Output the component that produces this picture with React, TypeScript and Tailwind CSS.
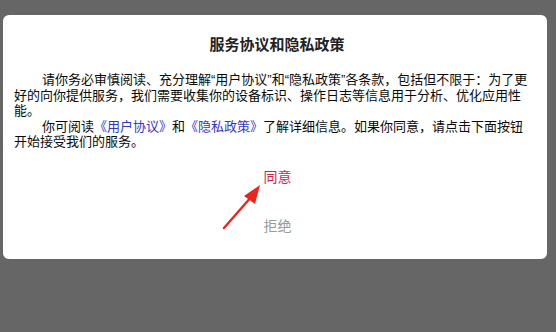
export default function App() {
  return (
    <div className="relative h-[332px] w-[556px] bg-[#666666] px-[3px] pt-[15px] font-['Liberation_Sans','Noto_Sans_CJK_SC',sans-serif]">
      <div className="flex h-[244px] w-[544px] flex-col rounded-[6px] bg-white pl-[11px] pr-[17px]">
        {/* Title */}
        <h2 className="pt-[20px] pl-[10px] text-center text-[15px] leading-[20px] font-bold text-[#222222]">
          服务协议和隐私政策
        </h2>

        {/* Body */}
        <div className="mt-[17px] text-[13px] leading-[15.5px] text-[#0a0a0a]">
          <p className="indent-[28px]">
            请你务必审慎阅读、充分理解“用户协议”和“隐私政策”各条款，包括但不限于：为了更好的向你提供服务，我们需要收集你的设备标识、操作日志等信息用于分析、优化应用性能。
          </p>
          <p className="indent-[28px]">
            <span className="whitespace-nowrap">
              你可阅读<span className="text-[#3535c8]">《用户协议》</span>和<span className="text-[#3535c8]">《隐私政策》</span>了解详细信息。如果你同意，请点击下面按钮
            </span>
            <br />
            开始接受我们的服务。
          </p>
        </div>

        {/* Buttons */}
        <div className="mt-[17px] flex flex-col items-center pl-[11px]">
          <button className="text-[14px] leading-[20px] text-[#d81e4c]">同意</button>
          <button className="mt-[29px] text-[14px] leading-[20px] text-[#9a9a9a]">拒绝</button>
        </div>
      </div>

      {/* Annotation arrow */}
      <svg className="absolute left-[220px] top-[183px]" width="46" height="48" viewBox="0 0 46 48">
        <path d="M4 45 L32 13" stroke="#e8261e" strokeWidth="2.4" strokeLinecap="round" />
        <path d="M40 2 L24 13 L35 21 Z" fill="#e8261e" />
      </svg>
    </div>
  );
}
